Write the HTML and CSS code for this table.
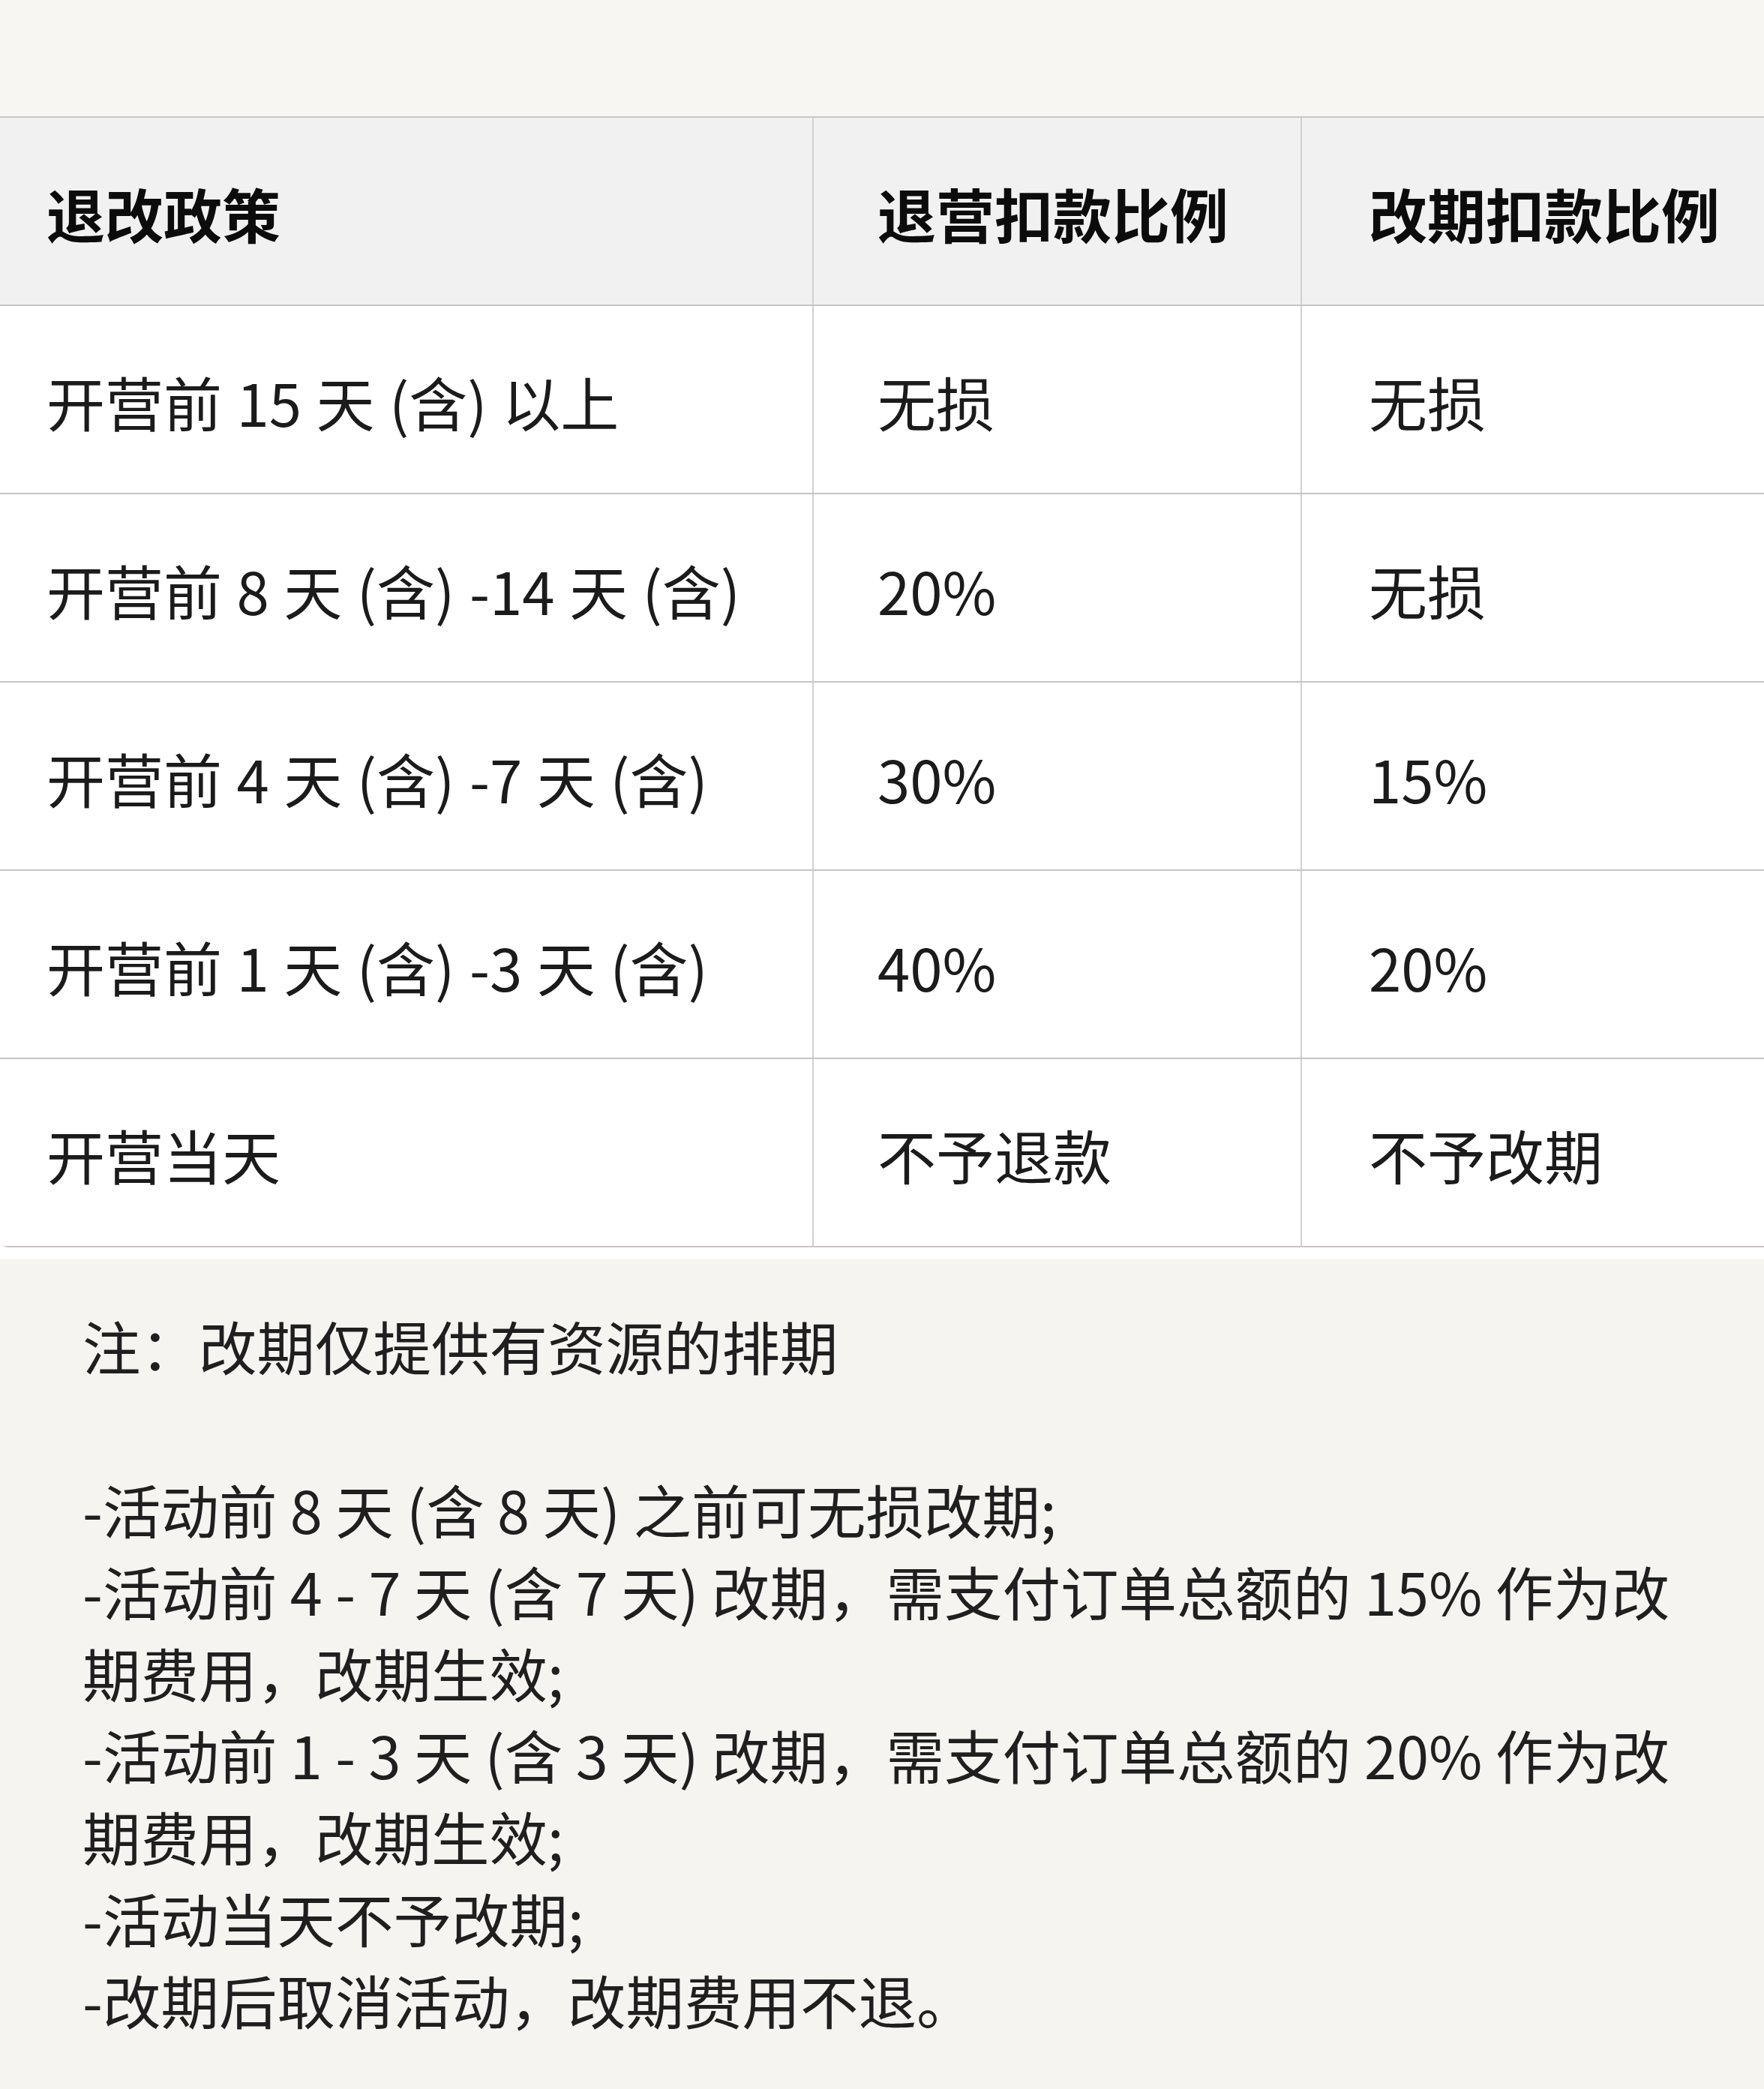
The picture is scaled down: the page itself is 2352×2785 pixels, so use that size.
FILE: index.html
```html
<!DOCTYPE html>
<html lang="zh-CN">
<head>
<meta charset="utf-8">
<title>退改政策</title>
<link rel="stylesheet" href="styles.css">
</head>
<body>
<div class="page">
  <div class="top-band"></div>
  <div class="table-section">
    <div class="policy-table">
      <div class="row head">
        <div class="cell c1">退改政策</div>
        <div class="cell c2">退营扣款比例</div>
        <div class="cell c3">改期扣款比例</div>
      </div>
      <div class="row">
        <div class="cell c1">开营前 15 天 (含) 以上</div>
        <div class="cell c2">无损</div>
        <div class="cell c3">无损</div>
      </div>
      <div class="row">
        <div class="cell c1">开营前 8 天 (含) -14 天 (含)</div>
        <div class="cell c2">20%</div>
        <div class="cell c3">无损</div>
      </div>
      <div class="row">
        <div class="cell c1">开营前 4 天 (含) -7 天 (含)</div>
        <div class="cell c2">30%</div>
        <div class="cell c3">15%</div>
      </div>
      <div class="row">
        <div class="cell c1">开营前 1 天 (含) -3 天 (含)</div>
        <div class="cell c2">40%</div>
        <div class="cell c3">20%</div>
      </div>
      <div class="row last">
        <div class="cell c1">开营当天</div>
        <div class="cell c2">不予退款</div>
        <div class="cell c3">不予改期</div>
      </div>
    </div>
  </div>
  <div class="notes">
    <p class="note-line">注：改期仅提供有资源的排期</p>
    <p class="note-line blank">&nbsp;</p>
    <p class="note-line">-活动前 8 天 (含 8 天) 之前可无损改期;</p>
    <p class="note-line">-活动前 4 - 7 天 (含 7 天) 改期，需支付订单总额的 15% 作为改期费用，改期生效;</p>
    <p class="note-line">-活动前 1 - 3 天 (含 3 天) 改期，需支付订单总额的 20% 作为改期费用，改期生效;</p>
    <p class="note-line">-活动当天不予改期;</p>
    <p class="note-line">-改期后取消活动，改期费用不退。</p>
  </div>
</div>
</body>
</html>
```
FILE: styles.css
```css
html, body {
  margin: 0;
  padding: 0;
}
body {
  width: 2352px;
  height: 2785px;
  overflow: hidden;
  background: #f5f4f0;
  font-family: "Noto Sans CJK SC", "Noto Sans", sans-serif;
}
.page {
  display: flex;
  flex-direction: column;
  width: 2352px;
  overflow: hidden;
}
.top-band {
  height: 155px;
  background: #f8f6f2;
}
.table-section {
  background: #ffffff;
  padding-bottom: 16px;
  overflow: hidden;
}
.policy-table {
  width: 2400px;
  border-top: 2px solid #cac6c5;
  border-bottom-left-radius: 10px;
  overflow: hidden;
  background: #ffffff;
}
.row {
  display: grid;
  grid-template-columns: 1083px 651px 1fr;
  height: 249px;
  border-bottom: 2px solid #c9c5c4;
}
.row.head {
  background: #f1f1f1;
}
.cell {
  display: flex;
  align-items: center;
  font-size: 78px;
  word-spacing: 2px;
  color: #1b1b1b;
  white-space: nowrap;
  padding-top: 4px;
  box-sizing: border-box;
}
.row.head .cell {
  font-weight: 700;
  color: #0c0c0c;
}
.c1 {
  padding-left: 62px;
}
.c2 {
  padding-left: 85px;
  border-left: 2px solid #d2d0d0;
}
.c3 {
  padding-left: 89px;
  border-left: 2px solid #d2d0d0;
}
.notes {
  background: #f5f4f0;
  padding: 60px 80px 40px 110px;
}
.note-line {
  margin: 0;
  font-size: 77.5px;
  line-height: 109px;
  color: #1f1f1f;
}
```
